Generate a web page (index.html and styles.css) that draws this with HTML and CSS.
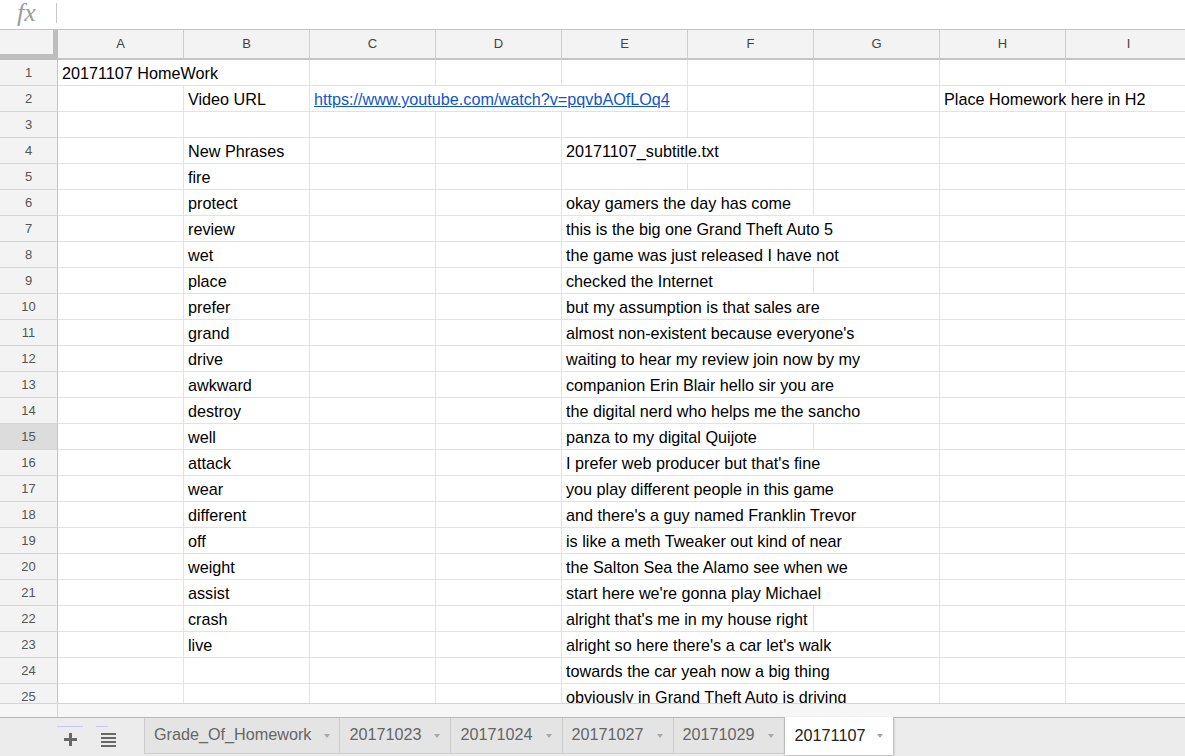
FILE: index.html
```html
<!DOCTYPE html>
<html>
<head>
<meta charset="utf-8">
<link rel="stylesheet" href="styles.css">
</head>
<body>
<div class="app">
  <div class="formula">
    <div class="fx">fx</div>
    <div class="sep"></div>
    <div class="input"></div>
  </div>
  <div class="grid-wrap">
    <div class="grid">
      <div class="corner"></div>
      <div class="ch">A</div><div class="ch">B</div><div class="ch">C</div><div class="ch">D</div><div class="ch">E</div><div class="ch">F</div><div class="ch">G</div><div class="ch">H</div><div class="ch">I</div>

      <div class="rh">1</div>
      <div class="c s2">20171107 HomeWork</div><div class="c"></div><div class="c"></div><div class="c"></div><div class="c"></div><div class="c"></div><div class="c"></div><div class="c"></div>

      <div class="rh">2</div>
      <div class="c"></div><div class="c">Video URL</div><div class="c s3"><span class="link">https://www.youtube.com/watch?v=pqvbAOfLOq4</span></div><div class="c"></div><div class="c"></div><div class="c s2">Place Homework here in H2</div>

      <div class="rh">3</div>
      <div class="c"></div><div class="c"></div><div class="c"></div><div class="c"></div><div class="c"></div><div class="c"></div><div class="c"></div><div class="c"></div><div class="c"></div>

      <div class="rh">4</div>
      <div class="c"></div><div class="c">New Phrases</div><div class="c"></div><div class="c"></div><div class="c s2">20171107_subtitle.txt</div><div class="c"></div><div class="c"></div><div class="c"></div>

      <div class="rh">5</div>
      <div class="c"></div><div class="c">fire</div><div class="c"></div><div class="c"></div><div class="c"></div><div class="c"></div><div class="c"></div><div class="c"></div><div class="c"></div>

      <div class="rh">6</div>
      <div class="c"></div><div class="c">protect</div><div class="c"></div><div class="c"></div><div class="c s2">okay gamers the day has come</div><div class="c"></div><div class="c"></div><div class="c"></div>

      <div class="rh">7</div>
      <div class="c"></div><div class="c">review</div><div class="c"></div><div class="c"></div><div class="c s3">this is the big one Grand Theft Auto 5</div><div class="c"></div><div class="c"></div>

      <div class="rh">8</div>
      <div class="c"></div><div class="c">wet</div><div class="c"></div><div class="c"></div><div class="c s3">the game was just released I have not</div><div class="c"></div><div class="c"></div>

      <div class="rh">9</div>
      <div class="c"></div><div class="c">place</div><div class="c"></div><div class="c"></div><div class="c s2">checked the Internet</div><div class="c"></div><div class="c"></div><div class="c"></div>

      <div class="rh">10</div>
      <div class="c"></div><div class="c">prefer</div><div class="c"></div><div class="c"></div><div class="c s3">but my assumption is that sales are</div><div class="c"></div><div class="c"></div>

      <div class="rh">11</div>
      <div class="c"></div><div class="c">grand</div><div class="c"></div><div class="c"></div><div class="c s3">almost non-existent because everyone's</div><div class="c"></div><div class="c"></div>

      <div class="rh">12</div>
      <div class="c"></div><div class="c">drive</div><div class="c"></div><div class="c"></div><div class="c s3">waiting to hear my review join now by my</div><div class="c"></div><div class="c"></div>

      <div class="rh">13</div>
      <div class="c"></div><div class="c">awkward</div><div class="c"></div><div class="c"></div><div class="c s3">companion Erin Blair hello sir you are</div><div class="c"></div><div class="c"></div>

      <div class="rh">14</div>
      <div class="c"></div><div class="c">destroy</div><div class="c"></div><div class="c"></div><div class="c s3">the digital nerd who helps me the sancho</div><div class="c"></div><div class="c"></div>

      <div class="rh sel">15</div>
      <div class="c"></div><div class="c">well</div><div class="c"></div><div class="c"></div><div class="c s2">panza to my digital Quijote</div><div class="c"></div><div class="c"></div><div class="c"></div>

      <div class="rh">16</div>
      <div class="c"></div><div class="c">attack</div><div class="c"></div><div class="c"></div><div class="c s3">I prefer web producer but that's fine</div><div class="c"></div><div class="c"></div>

      <div class="rh">17</div>
      <div class="c"></div><div class="c">wear</div><div class="c"></div><div class="c"></div><div class="c s3">you play different people in this game</div><div class="c"></div><div class="c"></div>

      <div class="rh">18</div>
      <div class="c"></div><div class="c">different</div><div class="c"></div><div class="c"></div><div class="c s3">and there's a guy named Franklin Trevor</div><div class="c"></div><div class="c"></div>

      <div class="rh">19</div>
      <div class="c"></div><div class="c">off</div><div class="c"></div><div class="c"></div><div class="c s3">is like a meth Tweaker out kind of near</div><div class="c"></div><div class="c"></div>

      <div class="rh">20</div>
      <div class="c"></div><div class="c">weight</div><div class="c"></div><div class="c"></div><div class="c s3">the Salton Sea the Alamo see when we</div><div class="c"></div><div class="c"></div>

      <div class="rh">21</div>
      <div class="c"></div><div class="c">assist</div><div class="c"></div><div class="c"></div><div class="c s3">start here we're gonna play Michael</div><div class="c"></div><div class="c"></div>

      <div class="rh">22</div>
      <div class="c"></div><div class="c">crash</div><div class="c"></div><div class="c"></div><div class="c s2">alright that's me in my house right</div><div class="c"></div><div class="c"></div><div class="c"></div>

      <div class="rh">23</div>
      <div class="c"></div><div class="c">live</div><div class="c"></div><div class="c"></div><div class="c s3">alright so here there's a car let's walk</div><div class="c"></div><div class="c"></div>

      <div class="rh">24</div>
      <div class="c"></div><div class="c"></div><div class="c"></div><div class="c"></div><div class="c s3">towards the car yeah now a big thing</div><div class="c"></div><div class="c"></div>

      <div class="rh">25</div>
      <div class="c"></div><div class="c"></div><div class="c"></div><div class="c"></div><div class="c s3">obviously in Grand Theft Auto is driving</div><div class="c"></div><div class="c"></div>
    </div>
  </div>
  <div class="hscroll"><div class="hs-left"></div></div>
  <div class="tabbar">
    <div class="tools">
      <div class="btn btn-add">
        <div class="hl"></div>
        <svg width="13" height="13" viewBox="0 0 13 13"><rect x="0" y="5" width="13" height="3" fill="#686868"/><rect x="5" y="0" width="3" height="13" fill="#686868"/></svg>
      </div>
      <div class="btn btn-list">
        <div class="hl"></div>
        <svg width="15" height="14" viewBox="0 0 15 14"><rect x="0" y="0" width="15" height="2" fill="#686868"/><rect x="0" y="4" width="15" height="2" fill="#686868"/><rect x="0" y="8" width="15" height="2" fill="#686868"/><rect x="0" y="12" width="15" height="2" fill="#686868"/></svg>
      </div>
    </div>
    <div class="tabs">
      <div class="tab first"><span>Grade_Of_Homework</span><i class="arrow"></i></div>
      <div class="tab"><span>20171023</span><i class="arrow"></i></div>
      <div class="tab"><span>20171024</span><i class="arrow"></i></div>
      <div class="tab"><span>20171027</span><i class="arrow"></i></div>
      <div class="tab"><span>20171029</span><i class="arrow"></i></div>
      <div class="tab active"><span>20171107</span><i class="arrow"></i></div>
    </div>
  </div>
</div>
</body>
</html>
```

FILE: styles.css
```css
* { box-sizing: border-box; }
html, body { margin: 0; padding: 0; }
body {
  width: 1185px;
  height: 756px;
  overflow: hidden;
  background: #fff;
  font-family: "Liberation Sans", Arial, sans-serif;
}
.app {
  display: flex;
  flex-direction: column;
  width: 1185px;
  height: 756px;
}
.formula {
  height: 30px;
  flex: none;
  display: flex;
  align-items: center;
  border-bottom: 1px solid #c4c4c4;
  background: #fff;
}
.fx {
  width: 56px;
  padding-left: 17px;
  font-family: "Liberation Serif", "Times New Roman", serif;
  font-style: italic;
  font-size: 26px;
  line-height: 28px;
  color: #9c9c9c;
  margin-top: -3px;
}
.sep {
  width: 1px;
  height: 20px;
  background: #c8c8c8;
  margin-top: -3px;
}
.input { flex: 1; }

.grid-wrap {
  height: 673px;
  flex: none;
  overflow: hidden;
}
.grid {
  display: grid;
  grid-template-columns: 58px repeat(9, 126px);
  grid-template-rows: 30px;
  grid-auto-rows: 26px;
  width: 1192px;
}
.corner {
  background: #f3f3f3;
  border-right: 5px solid #bdbdbd;
  border-bottom: 6px solid #bdbdbd;
}
.ch {
  background: #f3f3f3;
  border-right: 1px solid #cfcfcf;
  border-bottom: 2px solid #c4c4c4;
  font-size: 13px;
  color: #444;
  text-align: center;
  line-height: 28px;
}
.rh {
  background: #f3f3f3;
  border-right: 1px solid #c4c4c4;
  border-bottom: 1px solid #d6d6d6;
  font-size: 13px;
  color: #555;
  text-align: center;
  line-height: 25px;
}
.rh.sel { background: #dcdcdc; }
.c {
  border-right: 1px solid #e2e2e2;
  border-bottom: 1px solid #e2e2e2;
  padding: 0 3px 0 4px;
  font-size: 16.2px;
  line-height: 26px;
  color: #000;
  white-space: nowrap;
  overflow: hidden;
}
.s2 { grid-column: span 2; }
.s3 { grid-column: span 3; }
.link {
  color: #1155cc;
  text-decoration: underline;
}

.hscroll {
  height: 15px;
  flex: none;
  background: #f6f6f6;
  border-top: 1px solid #d4d4d4;
  border-bottom: 1px solid #b8b8b8;
  display: flex;
}
.hs-left {
  width: 58px;
  border-right: 1px solid #d4d4d4;
}

.tabbar {
  flex: 1;
  background: #ececec;
  display: flex;
  align-items: stretch;
}
.tools {
  width: 144px;
  flex: none;
  display: flex;
}
.btn {
  display: flex;
  flex-direction: column;
}
.btn .hl {
  height: 1px;
  background: #c9c9f3;
  margin-top: 8px;
}
.btn-add {
  width: 26px;
  margin-left: 57px;
  align-items: center;
}
.btn-add .hl { align-self: stretch; }
.btn-add svg { margin-top: 6px; margin-left: 1px; }
.btn-list {
  width: 22px;
  margin-left: 13px;
  align-items: flex-start;
}
.btn-list .hl { width: 12px; }
.btn-list svg { margin-top: 6px; margin-left: 5px; }

.tabs {
  display: flex;
  align-items: flex-start;
  border-left: 1px solid #cdcdcd;
  height: 36px;
}
.tab {
  height: 36px;
  display: flex;
  align-items: center;
  gap: 13px;
  padding: 0 10px 0 9px;
  background: #e4e4e4;
  border-right: 1px solid #cdcdcd;
  border-bottom: 1px solid #cdcdcd;
  font-size: 16.2px;
  color: #666;
  white-space: nowrap;
}
.tab.first { gap: 13px; padding-right: 9px; }
.tab span { margin-top: -2px; }
.arrow {
  width: 0;
  height: 0;
  border-left: 3.5px solid transparent;
  border-right: 3.5px solid transparent;
  border-top: 4px solid #a8a8a8;
}
.tab.active {
  background: #fff;
  color: #222;
  height: 38px;
  margin-top: -1px;
  border-bottom: none;
  border-right: 1px solid #c4c4c4;
  box-shadow: 0 1px 2px rgba(0,0,0,0.25);
  gap: 12px;
  padding-right: 10px;
  padding-left: 10px;
}
```
